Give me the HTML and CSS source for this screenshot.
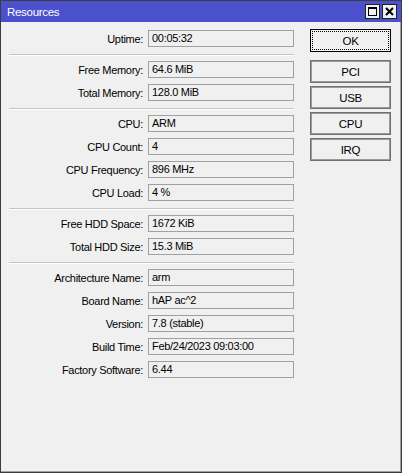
FILE: index.html
```html
<!DOCTYPE html>
<html lang="en">
<head>
    <meta charset="UTF-8">
    <title>Resources</title>
    <link rel="stylesheet" href="styles.css">
</head>
<body>
<div class="window">
    <div class="titlebar">
        <span class="title">Resources</span>
        <div class="controls">
            <span class="ctl">
                <svg width="13" height="13" viewBox="0 0 13 13">
                    <rect x="2.5" y="2.5" width="8" height="8" fill="none" stroke="#000" stroke-width="1"/>
                    <rect x="2" y="2" width="9" height="2" fill="#000"/>
                </svg>
            </span>
            <span class="ctl">
                <svg width="13" height="13" viewBox="0 0 13 13">
                    <path d="M3 3 L10 10 M10 3 L3 10" stroke="#000" stroke-width="2"/>
                </svg>
            </span>
        </div>
    </div>
    <div class="content">
        <div class="form">
            <div class="row"><span class="label">Uptime:</span><span class="field">00:05:32</span></div>
            <div class="sep"></div>
            <div class="row"><span class="label">Free Memory:</span><span class="field">64.6 MiB</span></div>
            <div class="row"><span class="label">Total Memory:</span><span class="field">128.0 MiB</span></div>
            <div class="sep"></div>
            <div class="row"><span class="label">CPU:</span><span class="field">ARM</span></div>
            <div class="row"><span class="label">CPU Count:</span><span class="field">4</span></div>
            <div class="row"><span class="label">CPU Frequency:</span><span class="field">896 MHz</span></div>
            <div class="row"><span class="label">CPU Load:</span><span class="field">4 %</span></div>
            <div class="sep"></div>
            <div class="row"><span class="label">Free HDD Space:</span><span class="field">1672 KiB</span></div>
            <div class="row"><span class="label">Total HDD Size:</span><span class="field">15.3 MiB</span></div>
            <div class="sep"></div>
            <div class="row"><span class="label">Architecture Name:</span><span class="field">arm</span></div>
            <div class="row"><span class="label">Board Name:</span><span class="field">hAP ac^2</span></div>
            <div class="row"><span class="label">Version:</span><span class="field">7.8 (stable)</span></div>
            <div class="row"><span class="label">Build Time:</span><span class="field">Feb/24/2023 09:03:00</span></div>
            <div class="row"><span class="label">Factory Software:</span><span class="field">6.44</span></div>
        </div>
        <div class="buttons">
            <button class="btn ok">OK</button>
            <button class="btn">PCI</button>
            <button class="btn">USB</button>
            <button class="btn">CPU</button>
            <button class="btn">IRQ</button>
        </div>
    </div>
</div>
</body>
</html>
```
FILE: styles.css
```css
* {
    margin: 0;
    padding: 0;
    box-sizing: border-box;
}

body {
    font-family: "Liberation Sans", Arial, sans-serif;
    font-size: 11px;
    letter-spacing: -0.3px;
    color: #000;
    background: #f0f0f0;
}

.window {
    width: 402px;
    height: 473px;
    border: 1px solid #3c3c3c;
    background: #f0f0f0;
    box-shadow: inset -1px -1px 0 #a0a0a0;
    display: flex;
    flex-direction: column;
}

.titlebar {
    height: 21px;
    background: #4b50cc;
    display: flex;
    align-items: center;
    justify-content: space-between;
    padding: 0 4px 0 6px;
}

.title {
    color: #fff;
    font-size: 11.5px;
}

.controls {
    display: flex;
    gap: 2px;
}

.ctl {
    width: 15px;
    height: 15px;
    background: #f0f0f0;
    border: 1px solid #202020;
    display: flex;
    align-items: center;
    justify-content: center;
}

.content {
    display: flex;
    gap: 16px;
    padding-left: 8px;
}

.form {
    width: 285px;
    padding-top: 8px;
    display: flex;
    flex-direction: column;
    gap: 6px;
}

.row {
    display: grid;
    grid-template-columns: 134px 146px;
    column-gap: 5px;
    height: 17px;
    align-items: center;
}

.label {
    text-align: right;
    white-space: nowrap;
}

.field {
    height: 17px;
    border: 1px solid #a0a0a0;
    padding-left: 3px;
    line-height: 15px;
    white-space: nowrap;
}

.sep {
    height: 2px;
    border-top: 1px solid #c4c4c4;
    border-bottom: 1px solid #fff;
    margin: 1px 0 -1px;
}

.buttons {
    padding-top: 7px;
    display: flex;
    flex-direction: column;
    gap: 3px;
}

.btn {
    width: 81px;
    height: 23px;
    font-family: inherit;
    font-size: 11.5px;
    letter-spacing: -0.3px;
    color: #000;
    background: #f0f0f0;
    border: 1px solid #707070;
    box-shadow: inset 0 0 0 1px #9a9a9a;
}

.btn.ok {
    border-color: #000;
    box-shadow: none;
    outline: 1px dotted #000;
    outline-offset: -3px;
    margin-bottom: 5px;
}
```
